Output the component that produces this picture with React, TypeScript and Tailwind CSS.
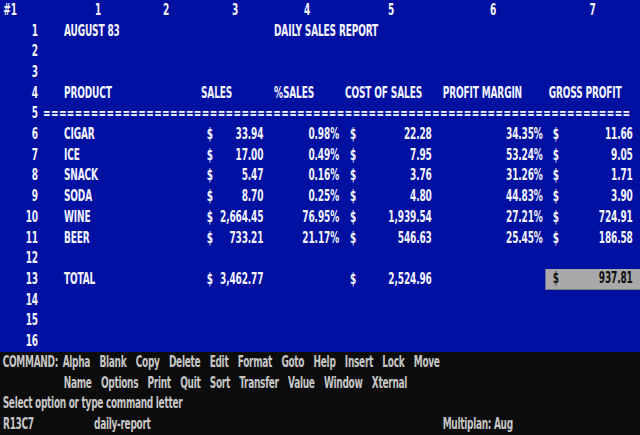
import React from "react";

type Item = {
  name: string;
  sales: string;
  pct: string;
  cost: string;
  margin: string;
  gross: string;
};

const items: Item[] = [
  { name: "CIGAR", sales: "33.94", pct: "0.98%", cost: "22.28", margin: "34.35%", gross: "11.66" },
  { name: "ICE", sales: "17.00", pct: "0.49%", cost: "7.95", margin: "53.24%", gross: "9.05" },
  { name: "SNACK", sales: "5.47", pct: "0.16%", cost: "3.76", margin: "31.26%", gross: "1.71" },
  { name: "SODA", sales: "8.70", pct: "0.25%", cost: "4.80", margin: "44.83%", gross: "3.90" },
  { name: "WINE", sales: "2,664.45", pct: "76.95%", cost: "1,939.54", margin: "27.21%", gross: "724.91" },
  { name: "BEER", sales: "733.21", pct: "21.17%", cost: "546.63", margin: "25.45%", gross: "186.58" },
];

const menu1 = ["Alpha", "Blank", "Copy", "Delete", "Edit", "Format", "Goto", "Help", "Insert", "Lock", "Move"];
const menu2 = ["Name", "Options", "Print", "Quit", "Sort", "Transfer", "Value", "Window", "Xternal"];

// the whole screen is drawn 1.5x wide and squeezed back to 640px,
// so every horizontal number below is in the wide coordinates
const rowCls =
  "grid h-[20.714px] grid-cols-[91.5px_111px_93px_114px_102px_150px_156px_142.5px] whitespace-nowrap";

function Num({ n }: { n?: number | string }) {
  return <div className="flex items-center justify-end pr-[34.5px]">{n}</div>;
}

function Money({ v, cls }: { v: string; cls: string }) {
  return (
    <div className={`flex items-center justify-between ${cls}`}>
      <span>$</span>
      <span>{v}</span>
    </div>
  );
}

function EmptyRow({ n }: { n: number }) {
  return (
    <div className={rowCls}>
      <Num n={n} />
    </div>
  );
}

export default function App() {
  return (
    <div className="h-[435px] w-[640px] overflow-hidden bg-[#0c0c0c]">
      <div className="w-[960px] origin-top-left scale-x-[0.6667] font-['DejaVu_Sans_Condensed','DejaVu_Sans',sans-serif] text-[15px] font-bold leading-none font-stretch-condensed">
        <div className="bg-[#0010a0] tracking-[-0.2px] text-[#f4f4ff]">
          {/* column header */}
          <div className={rowCls}>
            <div className="flex items-center pl-[5px]">#1</div>
            {[1, 2, 3, 4, 5, 6, 7].map((c) => (
              <div key={c} className="flex items-center justify-center">
                {c}
              </div>
            ))}
          </div>

          <div className={rowCls}>
            <Num n={1} />
            <div className="flex items-center pl-[4.5px]">AUGUST 83</div>
            <div />
            <div />
            <div className="flex items-center pl-[1.5px]">DAILY SALES REPORT</div>
          </div>
          <EmptyRow n={2} />
          <EmptyRow n={3} />

          <div className={rowCls}>
            <Num n={4} />
            <div className="flex items-center pl-[4.5px]">PRODUCT</div>
            <div />
            <div className="flex items-center pl-[6px]">SALES</div>
            <div className="flex items-center pl-[1.5px]">%SALES</div>
            <div className="flex items-center pl-[6px]">COST OF SALES</div>
            <div className="flex items-center pl-[2.5px]">PROFIT MARGIN</div>
            <div className="flex items-center pl-[5.5px]">GROSS PROFIT</div>
          </div>

          <div className={rowCls}>
            <Num n={5} />
            <div className="col-span-7 -ml-[27px] flex items-center tracking-[0.6px]">
              {"=".repeat(74)}
            </div>
          </div>

          {items.map((it, i) => (
            <div key={it.name} className={rowCls}>
              <Num n={i + 6} />
              <div className="flex items-center pl-[4.5px]">{it.name}</div>
              <div />
              <Money v={it.sales} cls="pl-[14.5px] pr-[14.5px]" />
              <div className="flex items-center justify-end pr-[3px]">{it.pct}</div>
              <Money v={it.cost} cls="pl-[13.5px] pr-[14px]" />
              <div className="flex items-center justify-end pr-[3.5px]">{it.margin}</div>
              <Money v={it.gross} cls="pl-[11.5px] pr-[11px]" />
            </div>
          ))}

          <EmptyRow n={12} />

          <div className={rowCls}>
            <Num n={13} />
            <div className="flex items-center pl-[4.5px]">TOTAL</div>
            <div />
            <Money v="3,462.77" cls="pl-[14.5px] pr-[14.5px]" />
            <div />
            <Money v="2,524.96" cls="pl-[13.5px] pr-[14px]" />
            <div />
            <Money v="937.81" cls="border-b border-[#7c7c7c] bg-[#a9a9a9] pl-[11.5px] pr-[11px] text-[#101010]" />
          </div>

          <EmptyRow n={14} />
          <EmptyRow n={15} />
          <EmptyRow n={16} />
        </div>

        {/* command area */}
        <div className="tracking-[-0.45px] text-[#c6c6c6]">
          <div className="flex h-[20.714px] items-center">
            <div className="w-[91.5px] pl-[4px]">COMMAND:</div>
            <div className="flex gap-[14px] pl-[2.5px]">
              {menu1.map((m) => (
                <span key={m}>{m}</span>
              ))}
            </div>
          </div>
          <div className="flex h-[20.714px] items-center">
            <div className="w-[91.5px]" />
            <div className="flex gap-[14px] pl-[4px]">
              {menu2.map((m) => (
                <span key={m}>{m}</span>
              ))}
            </div>
          </div>
          <div className="flex h-[20.714px] items-center pl-[4px]">Select option or type command letter</div>
          <div className="flex h-[20.714px] items-center whitespace-nowrap">
            <div className="w-[141px] pl-[4.5px]">R13C7</div>
            <div className="w-[523px]">daily-report</div>
            <div>Multiplan: Aug</div>
          </div>
        </div>
      </div>
    </div>
  );
}
